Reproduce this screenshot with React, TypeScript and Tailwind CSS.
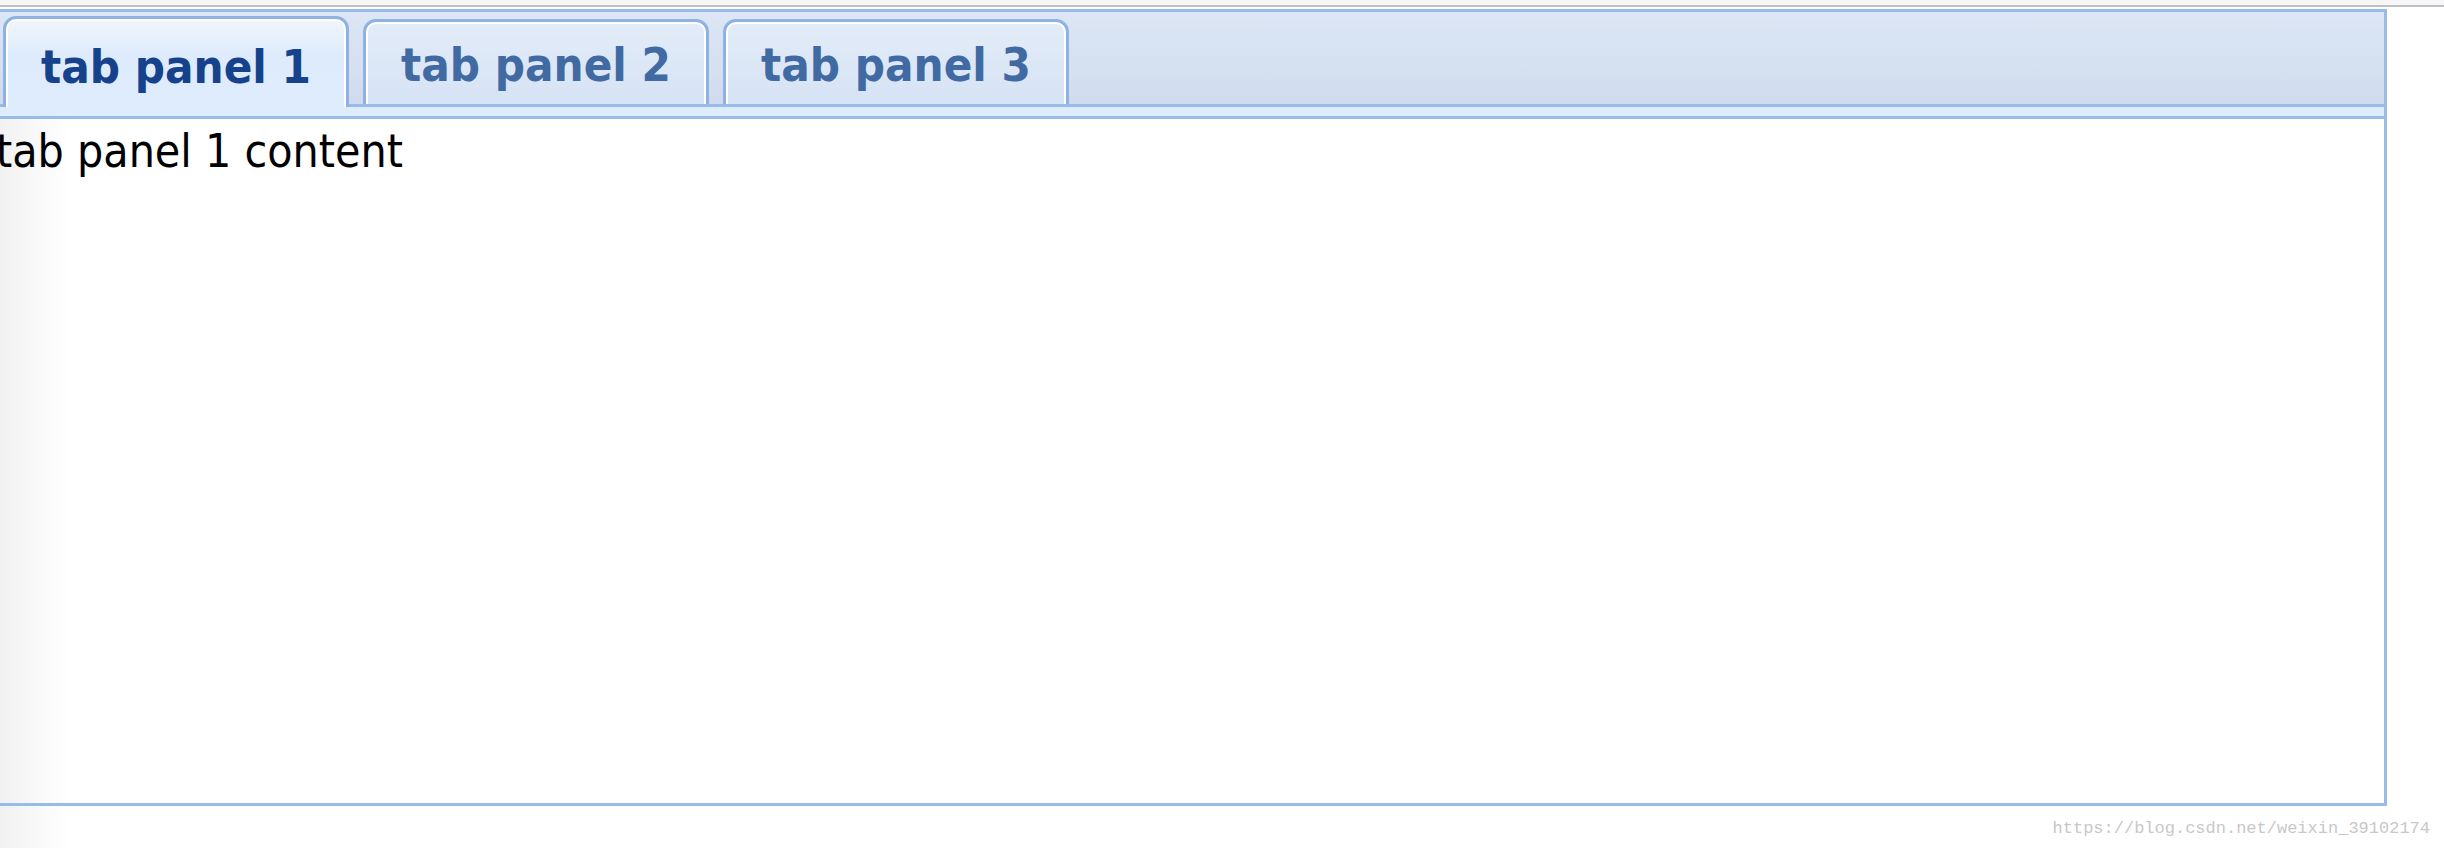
import React, { useState } from "react";

const tabs = ["tab panel 1", "tab panel 2", "tab panel 3"];

const font = "font-['DejaVu_Sans_Condensed','DejaVu_Sans',sans-serif] font-stretch-condensed";

export default function App() {
  const [active, setActive] = useState(0);

  return (
    <div className="min-h-screen w-full overflow-hidden bg-[linear-gradient(to_right,#f1f1f1_0px,#ffffff_70px)]">
      {/* browser edge */}
      <div className="h-[5px] bg-[#f6f6f6]" />
      <div className="h-[2px] bg-[#bcc1c8]" />
      <div className="h-[2px] bg-white" />

      <div className={`-ml-[4px] w-[2391px] ${font}`}>
        {/* tab strip */}
        <div className="border-x-[3px] border-t-[3px] border-[#99bbe8] bg-[linear-gradient(to_bottom,#dce6f5,#cedaec)]">
          <div className="flex items-end gap-[14px] border-b-[3px] border-[#99bbe8] pl-[4px] pt-[4px]">
            {tabs.map((label, i) =>
              i === active ? (
                <button
                  key={label}
                  onClick={() => setActive(i)}
                  className="relative -mb-[3px] h-[91px] w-[346px] rounded-t-[13px] border-[3px] border-b-0 border-[#8db2e3] bg-[linear-gradient(to_bottom,#f1f6fd,#deebfc_40%,#deecfd)] pt-[7px] text-center text-[47px] font-bold leading-[54px] text-[#15428b] shadow-[inset_0_2px_0_#ffffff,inset_2px_0_0_#ffffff,inset_-2px_0_0_#ffffff]"
                >
                  {label}
                </button>
              ) : (
                <button
                  key={label}
                  onClick={() => setActive(i)}
                  className="h-[85px] w-[346px] rounded-t-[13px] border-[3px] border-b-0 border-[#8db2e3] bg-[linear-gradient(to_bottom,#e3ecf8,#d6e3f5)] pt-[4px] text-center text-[47px] font-bold leading-[54px] text-[#416aa3] shadow-[inset_0_2px_0_#ffffff,inset_2px_0_0_#ffffff,inset_-2px_0_0_#ffffff]"
                >
                  {label}
                </button>
              )
            )}
          </div>
          {/* strip spacer */}
          <div className="h-[9px] bg-[#deecfd]" />
        </div>

        {/* body */}
        <div className="h-[690px] border-[3px] border-[#99bbe8] bg-[linear-gradient(to_right,#f1f1f1_0px,#ffffff_70px)] pt-[5px] indent-[-3px] text-[46px] leading-[54px] text-black">
          {tabs[active]} content
        </div>
      </div>

      <div className="mt-[12px] flex justify-end pr-[14px]">
        <span className="font-['Liberation_Mono',monospace] text-[17px] leading-[22px] text-[#c8c8c8]">
          https://blog.csdn.net/weixin_39102174
        </span>
      </div>
    </div>
  );
}
